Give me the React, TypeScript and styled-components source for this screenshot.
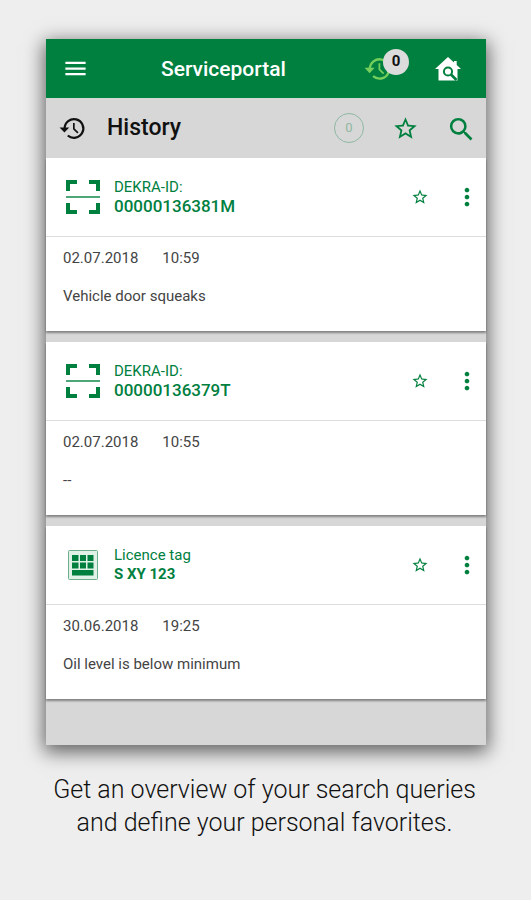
import React from 'react';
import styled, { createGlobalStyle } from 'styled-components';
import { MdMenu, MdMoreVert, MdSearch, MdStarBorder } from 'react-icons/md';

const GREEN = '#00803f';

const GlobalStyle = createGlobalStyle`
  *, *::before, *::after { box-sizing: border-box; }
  body {
    margin: 0;
    background: #eeeeee;
    color: #111111;
    font-family: Roboto, "Liberation Sans", sans-serif;
  }
  h1, h2, p { margin: 0; }
  button { font: inherit; }
`;

const Page = styled.div`
  min-height: 100vh;
  padding: 39px 45px 24px 46px;
  background: #eeeeee;
`;

const Screen = styled.main`
  background: #d7d7d7;
  box-shadow: 0 5px 18px 2px rgba(0, 0, 0, 0.6);
`;

const TopBar = styled.header`
  display: grid;
  grid-template-columns: 115px 1fr auto;
  align-items: center;
  height: 59px;
  padding-right: 22px;
  background: ${GREEN};
  color: #ffffff;
`;

const AppTitle = styled.h1`
  font-size: 21px;
  line-height: 28px;
  font-weight: 500;
`;

const SubBar = styled.div`
  display: flex;
  align-items: center;
  height: 60px;
  padding: 0 12px 0 13px;
  color: #111111;
`;

const SubTitle = styled.h2`
  flex: 1;
  padding-left: 21px;
  font-size: 23px;
  line-height: 28px;
  font-weight: 500;
`;

const Actions = styled.div<{ $gap: number }>`
  display: flex;
  align-items: center;
  gap: ${(p) => p.$gap}px;
`;

const IconButton = styled.button<{ $size: number; $start?: number }>`
  position: relative;
  display: grid;
  place-items: center;
  width: ${(p) => p.$size}px;
  height: ${(p) => p.$size}px;
  margin-left: ${(p) => p.$start ?? 0}px;
  padding: 0;
  border: 0;
  background: none;
  color: inherit;
  cursor: pointer;
`;

const HistoryButton = styled(IconButton)`
  color: #74cf5c;
`;

const Badge = styled.span`
  position: absolute;
  top: -6px;
  left: 19px;
  width: 26px;
  height: 26px;
  border-radius: 50%;
  background: #dcdcdc;
  color: #111111;
  font-size: 15px;
  line-height: 25px;
  font-weight: 700;
  text-align: center;
`;

const CountButton = styled.button`
  width: 30px;
  height: 30px;
  padding: 0;
  border: 1px solid #8fb8a2;
  border-radius: 50%;
  background: none;
  color: #8fb8a2;
  font-size: 13px;
  line-height: 28px;
`;

const List = styled.ul`
  display: grid;
  gap: 11px;
  margin: 0;
  padding: 0 0 46px;
  list-style: none;
`;

const Card = styled.li`
  background: #ffffff;
  box-shadow: 0 2px 2px rgba(0, 0, 0, 0.4);
`;

const CardHead = styled.div`
  display: flex;
  align-items: center;
  height: 79px;
  padding: 0 5px 0 20px;
  border-bottom: 1px solid #dddddd;
  color: ${GREEN};
`;

const Identity = styled.div`
  flex: 1;
  padding: 0 0 2px 14px;
  font-size: 15px;
  line-height: 19px;
`;

const Identifier = styled.strong<{ $compact: boolean }>`
  display: block;
  font-size: ${(p) => (p.$compact ? 15 : 17)}px;
  font-weight: ${(p) => (p.$compact ? 700 : 500)};
  line-height: 18px;
`;

const CardBody = styled.div`
  height: 94px;
  padding: 11px 17px;
  color: #444444;
  font-size: 15px;
  line-height: 20px;
`;

const Stamp = styled.div`
  display: flex;
  gap: 24px;
  margin-bottom: 18px;
`;

const Caption = styled.p`
  padding: 28px 3px 0 0;
  font-size: 25px;
  line-height: 33px;
  font-weight: 300;
  text-align: center;
`;

const HistoryIcon = ({ size }: { size: number }) => (
  <svg width={size} height={size} viewBox="0 0 24 24" fill="none" aria-hidden="true">
    <path d="M5 12a8.3 8.3 0 1 1 2.8 6.2" stroke="currentColor" strokeWidth="2" />
    <path d="M0.5 11h8.6L4.8 15.6z" fill="currentColor" />
    <path d="M13.2 7v5.3l3.6 3.6" stroke="currentColor" strokeWidth="1.5" />
  </svg>
);

const HomeSearchIcon = () => (
  <svg width="26" height="24" viewBox="0 0 26 24" aria-hidden="true">
    <path d="M13 0 19 5.500V4h2.700V8L26 12h-3.500v11.500h-19V12H0z" fill="#ffffff" />
    <circle cx="13" cy="14.5" r="4.1" fill="none" stroke={GREEN} strokeWidth="2" />
    <path d="m16 17.5 5.5 5.5" stroke={GREEN} strokeWidth="2.6" />
  </svg>
);

const ScanIcon = () => (
  <svg width="34" height="34" viewBox="0 0 34 34" fill="none" stroke={GREEN} aria-hidden="true">
    <path d="M2 11V2h9M23 2h9v9M32 23v9h-9M11 32H2v-9" strokeWidth="4" />
    <path d="M0 17h34" strokeWidth="2" opacity="0.7" />
  </svg>
);

const KeypadIcon = () => (
  <svg width="34" height="34" viewBox="0 0 34 34" fill={GREEN} aria-hidden="true">
    <rect x="2.5" y="2.5" width="29" height="29" rx="1" fill="#e0f1e7" stroke="#6fae8b" />
    <path d="M6 7h6.5v6H6zM14 7h6v6h-6zM21.500 7h6v6h-6zM6 14.500h6.500v6H6zM14 14.500h6v6h-6zM21.500 14.500h6v6h-6zM6 22h21.500v5.500H6z" />
  </svg>
);

type Entry = { kind: 'scan' | 'keypad'; label: string; id: string; date: string; time: string; note: string };

const entries: Entry[] = [
  { kind: 'scan', label: 'DEKRA-ID:', id: '00000136381M', date: '02.07.2018', time: '10:59', note: 'Vehicle door squeaks' },
  { kind: 'scan', label: 'DEKRA-ID:', id: '00000136379T', date: '02.07.2018', time: '10:55', note: '--' },
  { kind: 'keypad', label: 'Licence tag', id: 'S XY 123', date: '30.06.2018', time: '19:25', note: 'Oil level is below minimum' },
];

const HistoryCard = ({ entry }: { entry: Entry }) => (
  <Card>
    <CardHead>
      {entry.kind === 'scan' ? <ScanIcon /> : <KeypadIcon />}
      <Identity>
        {entry.label}
        <Identifier $compact={entry.kind === 'keypad'}>{entry.id}</Identifier>
      </Identity>
      <Actions $gap={23}>
        <IconButton $size={20} aria-label="Add to favorites"><MdStarBorder size={18} /></IconButton>
        <IconButton $size={28} aria-label="More options"><MdMoreVert size={28} /></IconButton>
      </Actions>
    </CardHead>
    <CardBody>
      <Stamp>
        <time>{entry.date}</time>
        <time>{entry.time}</time>
      </Stamp>
      <p>{entry.note}</p>
    </CardBody>
  </Card>
);

export default function App() {
  return (
    <>
      <GlobalStyle />
      <Page>
        <Screen>
          <TopBar>
            <IconButton $size={28} $start={15} aria-label="Menu"><MdMenu size={27} /></IconButton>
            <AppTitle>Serviceportal</AppTitle>
            <Actions $gap={40}>
              <HistoryButton $size={28} aria-label="Search history">
                <HistoryIcon size={28} />
                <Badge>0</Badge>
              </HistoryButton>
              <IconButton $size={32} aria-label="Home search"><HomeSearchIcon /></IconButton>
            </Actions>
          </TopBar>
          <SubBar>
            <HistoryIcon size={27} />
            <SubTitle>History</SubTitle>
            <Actions $gap={27}>
              <CountButton aria-label="Selected entries">0</CountButton>
              <IconButton $size={28} aria-label="Favorites"><MdStarBorder size={27} color={GREEN} /></IconButton>
              <IconButton $size={28} aria-label="Search"><MdSearch size={31} color={GREEN} /></IconButton>
            </Actions>
          </SubBar>
          <List>
            {entries.map((entry) => <HistoryCard key={entry.id} entry={entry} />)}
          </List>
        </Screen>
        <Caption>
          Get an overview of your search queries<br />and define your personal favorites.
        </Caption>
      </Page>
    </>
  );
}
